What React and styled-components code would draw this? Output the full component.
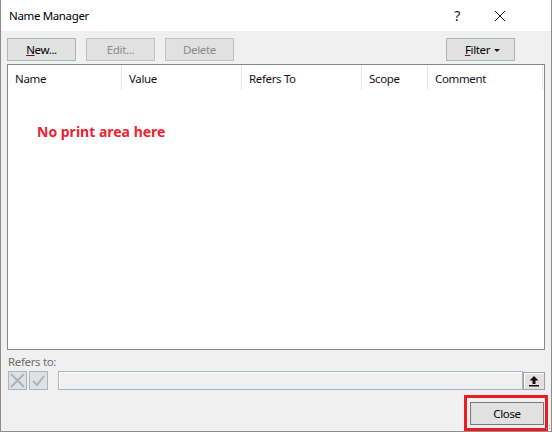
import React from 'react'
import styled, { createGlobalStyle } from 'styled-components'

const GlobalStyle = createGlobalStyle`
  html, body {
    margin: 0;
    padding: 0;
    background: #f0f0f0;
  }
  * {
    box-sizing: border-box;
  }
`

const columns = [
  { label: 'Name', width: 114 },
  { label: 'Value', width: 120 },
  { label: 'Refers To', width: 120 },
  { label: 'Scope', width: 66 },
  { label: 'Comment', width: 115 },
]

function App() {
  return (
    <>
      <GlobalStyle />
      <StDialog>
        <StTitleBar>
          <StTitle>Name Manager</StTitle>
          <StHelp>?</StHelp>
          <StCloseX>
            <svg width="12" height="12" viewBox="0 0 12 12">
              <path d="M1 1 L11 11 M11 1 L1 11" stroke="#1a1a1a" strokeWidth="1" fill="none" />
            </svg>
          </StCloseX>
        </StTitleBar>

        <StBody>
          <StToolbar>
            <StButton>
              <span><u>N</u>ew...</span>
            </StButton>
            <StButton disabled>Edit...</StButton>
            <StButton disabled>Delete</StButton>
            <StFilterButton>
              <span><u>F</u>ilter</span>
              <StCaret />
            </StFilterButton>
          </StToolbar>

          <StList>
            <StHeader>
              {columns.map((col) => (
                <StHeaderCell key={col.label} $width={col.width}>
                  {col.label}
                </StHeaderCell>
              ))}
            </StHeader>
            <StEmptyNote>No print area here</StEmptyNote>
          </StList>

          <StLabel>Refers to:</StLabel>
          <StRefersRow>
            <StIconButton>
              <svg width="17" height="17" viewBox="0 0 17 17">
                <path d="M2 2 L15 15 M15 2 L2 15" stroke="#a9b5be" strokeWidth="2" fill="none" />
              </svg>
            </StIconButton>
            <StIconButton>
              <svg width="17" height="17" viewBox="0 0 17 17">
                <path d="M3 9 L7 13 L14 4" stroke="#a9b5be" strokeWidth="2" fill="none" />
              </svg>
            </StIconButton>
            <StRefInput />
            <StCollapseButton>
              <svg width="12" height="12" viewBox="0 0 12 12">
                <path d="M6 1 L10.5 5.5 L7.5 5.5 L7.5 9 L4.5 9 L4.5 5.5 L1.5 5.5 Z" fill="#1d0a14" />
                <rect x="1" y="10" width="10" height="1.5" fill="#1d0a14" />
              </svg>
            </StCollapseButton>
          </StRefersRow>

          <StFooter>
            <StHighlight>
              <StCloseButton>Close</StCloseButton>
            </StHighlight>
          </StFooter>
        </StBody>

        <StGrip>
          <svg width="10" height="10" viewBox="0 0 10 10">
            <rect x="8" y="2" width="1" height="1" fill="#a0a0a0" />
            <rect x="5" y="5" width="1" height="1" fill="#a0a0a0" />
            <rect x="8" y="5" width="1" height="1" fill="#a0a0a0" />
            <rect x="2" y="8" width="1" height="1" fill="#a0a0a0" />
            <rect x="5" y="8" width="1" height="1" fill="#a0a0a0" />
            <rect x="8" y="8" width="1" height="1" fill="#a0a0a0" />
          </svg>
        </StGrip>
      </StDialog>
    </>
  )
}

export default App

const StDialog = styled.div`
  position: relative;
  width: 552px;
  height: 432px;
  display: flex;
  flex-direction: column;
  background: #f0f0f0;
  border: 1px solid #8c8c8c;
  border-top: none;
  font-family: "Noto Sans", "Open Sans", sans-serif;
  font-size: 11.5px;
  letter-spacing: -0.35px;
  color: #1a1a1a;
`

const StTitleBar = styled.div`
  height: 31px;
  flex-shrink: 0;
  display: flex;
  align-items: center;
  background: #ffffff;
  padding-left: 8px;
  padding-right: 33px;
`

const StTitle = styled.div`
  flex: 1;
  color: #000000;
  padding-bottom: 1px;
`

const StHelp = styled.div`
  width: 30px;
  text-align: center;
  font-size: 14px;
  margin-right: 10px;
`

const StCloseX = styled.div`
  width: 36px;
  display: flex;
  justify-content: center;
  align-items: center;
`

const StBody = styled.div`
  flex: 1;
  display: flex;
  flex-direction: column;
  padding: 7px 6px 0 6px;
`

const StToolbar = styled.div`
  display: flex;
  gap: 10px;
  height: 23px;
`

const StButton = styled.button`
  width: 69px;
  height: 23px;
  padding: 0;
  font-family: inherit;
  font-size: inherit;
  letter-spacing: inherit;
  background: #e1e1e1;
  border: 1px solid #a9b6be;
  color: #000000;
  display: flex;
  align-items: center;
  justify-content: center;

  &:disabled {
    color: #8a8a8a;
    background: #e1e1e1;
    border-color: #b9c3ca;
  }

  u {
    text-decoration-color: #7a0a30;
  }
`

const StFilterButton = styled(StButton)`
  margin-left: auto;
  margin-right: 30px;
  gap: 4px;
  padding-left: 4px;
`

const StCaret = styled.span`
  width: 0;
  height: 0;
  border-left: 3px solid transparent;
  border-right: 3px solid transparent;
  border-top: 3px solid #1a1a1a;
  margin-top: 1px;
`

const StList = styled.div`
  margin-top: 3px;
  height: 286px;
  background: #ffffff;
  border: 1px solid #828790;
`

const StHeader = styled.div`
  display: flex;
  height: 25px;
  padding-top: 1px;
`

const StHeaderCell = styled.div`
  width: ${(p) => p.$width}px;
  border-right: 1px solid #e5e5e5;
  padding-left: 7px;
  display: flex;
  align-items: center;
  color: #1a0f14;
`

const StEmptyNote = styled.div`
  margin-top: 32px;
  padding-left: 29px;
  font-size: 14px;
  letter-spacing: 0;
  font-weight: 700;
  color: #ec2330;
`

const StLabel = styled.div`
  margin-top: 4px;
  line-height: 16px;
  color: #6d6d6d;
  padding-left: 1px;
`

const StRefersRow = styled.div`
  margin-top: 1px;
  display: flex;
  align-items: center;
  height: 19px;
  padding-left: 1px;
`

const StIconButton = styled.div`
  width: 19px;
  height: 19px;
  margin-right: 2px;
  background: #e1e1e1;
  border: 1px solid #a9b5be;
  display: flex;
  align-items: center;
  justify-content: center;
`

const StRefInput = styled.div`
  margin-left: 8px;
  flex: 1;
  height: 19px;
  background: #f0f0f0;
  border: 1px solid #a9b5be;
  box-shadow: inset 1px 1px 0 #ffffff;
`

const StCollapseButton = styled.div`
  width: 22px;
  height: 18px;
  margin-top: 1px;
  background: #e1e1e1;
  border: 1px solid #a0a0a0;
  box-shadow: inset 1px 1px 0 #ffffff;
  display: flex;
  align-items: center;
  justify-content: center;
`

const StFooter = styled.div`
  margin-top: 5px;
  display: flex;
  justify-content: flex-end;
  margin-right: -3px;
`

const StHighlight = styled.div`
  width: 84px;
  height: 36px;
  border: 3px solid #ec1c24;
  padding: 4px 3px 0 3px;
`

const StCloseButton = styled.button`
  width: 74px;
  height: 23px;
  padding: 0;
  font-family: inherit;
  font-size: inherit;
  letter-spacing: inherit;
  color: #000000;
  background: #e1e1e1;
  border: 1px solid #7a7a7a;
`

const StGrip = styled.div`
  position: absolute;
  right: 0;
  bottom: 0;
  width: 10px;
  height: 10px;
`
